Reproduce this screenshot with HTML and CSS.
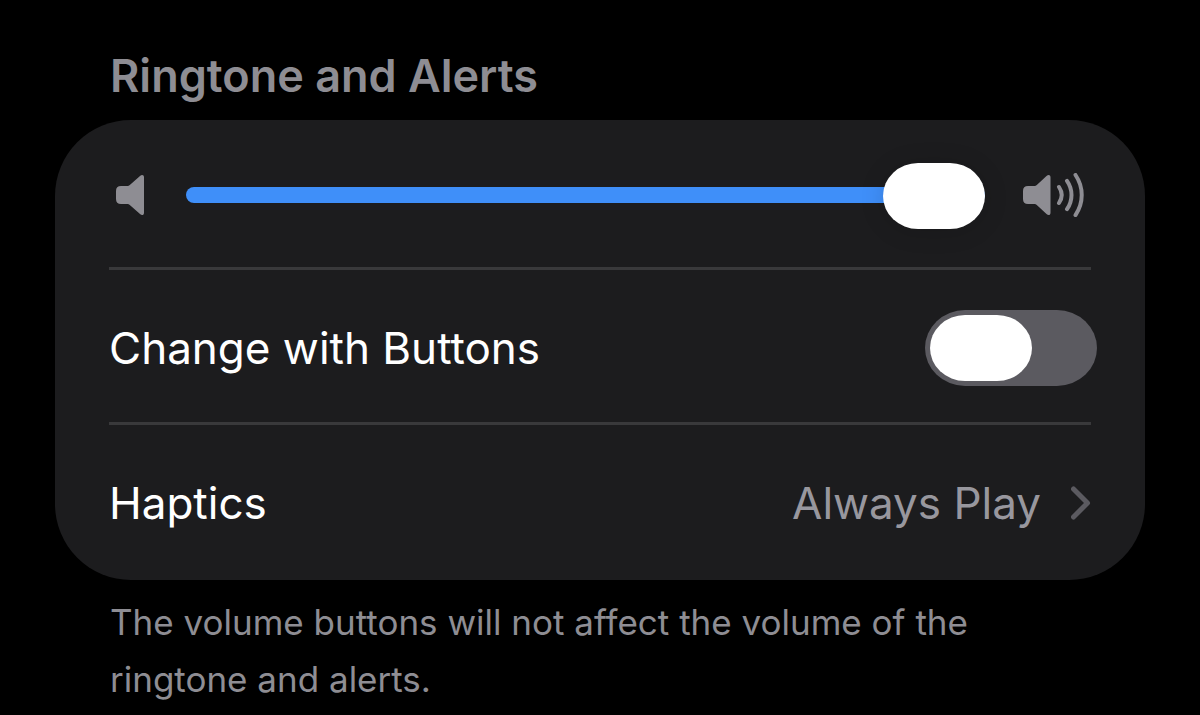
FILE: index.html
```html
<!DOCTYPE html>
<html lang="en">
<head>
    <meta charset="UTF-8">
    <meta name="viewport" content="width=device-width, initial-scale=1.0">
    <title>Sounds &amp; Haptics</title>
    <link rel="stylesheet" href="styles.css">
</head>
<body>
    <main class="settings">
        <h2 class="section-title" id="volumeTitle">Ringtone and Alerts</h2>

        <div class="card">
            <div class="row row-volume">
                <svg class="icon-speaker" viewBox="0 0 28 42" aria-hidden="true">
                    <path d="M5 12h6.500c.9 0 1.600-.3 2.300-.9L24 1.900C26 .2 28 .9 28 3.300v35.400c0 2.400-2 3.100-4 1.400L13.800 30.900c-.7-.6-1.400-.9-2.300-.9H5c-3.300 0-5-1.700-5-5v-8c0-3.300 1.700-5 5-5z"/>
                </svg>
                <input class="slider" type="range" min="0" max="100" value="100" aria-labelledby="volumeTitle">
                <svg class="icon-speaker-waves" viewBox="0 0 62 44" aria-hidden="true">
                    <path d="M5 13h6.500c.9 0 1.600-.3 2.300-.9L23.500 2.900c2-1.700 4-1 4 1.400v35.400c0 2.400-2 3.100-4 1.400L13.800 31.900c-.7-.6-1.400-.9-2.300-.9H5c-3.300 0-5-1.700-5-5v-8c0-3.300 1.700-5 5-5z"/>
                    <path class="wave" d="M36 14c3.400 5 3.400 11 0 16M44 7.800c6 8.600 6 19.800 0 28.400M52.500 2c8.300 12.200 8.300 27.800 0 40"/>
                </svg>
            </div>

            <label class="row row-switch">
                <span>Change with Buttons</span>
                <input class="toggle" type="checkbox" role="switch">
            </label>

            <a class="row row-link" href="#haptics">
                <span>Haptics</span>
                <span class="row-value">
                    Always Play
                    <svg class="icon-chevron" viewBox="0 0 20 34" aria-hidden="true">
                        <path d="M2.500 3l14 14-14 14"/>
                    </svg>
                </span>
            </a>
        </div>

        <p class="section-note">The volume buttons will not affect the volume of the ringtone and alerts.</p>
    </main>
</body>
</html>
```
FILE: styles.css
```css
body {
    margin: 0;
    background: #000000;
    color: #ffffff;
    font-family: Inter, "Liberation Sans", sans-serif;
    font-size: 44px;
    line-height: 56px;
}
.settings {
    padding: 48px 55px 0;
}
.section-title {
    margin: 0 0 16px;
    padding: 0 55px;
    color: #8e8d93;
    font-size: 45px;
    font-weight: 600;
    line-height: 56px;
}
.card {
    padding: 0 54px;
    background: #1c1c1e;
    border-radius: 76px;
}
.row {
    display: flex;
    align-items: center;
    justify-content: space-between;
    box-sizing: border-box;
    color: #ffffff;
    text-decoration: none;
}
.row + .row {
    border-top: 3px solid #39393b;
}
.row-volume {
    gap: 38px;
    min-height: 147px;
    padding: 3px 6px 0 7px;
}
.row-switch {
    min-height: 155px;
    padding-top: 4px;
}
.row-link {
    min-height: 158px;
}
.icon-speaker {
    flex: none;
    width: 28px;
    height: 42px;
    margin-right: 4px;
    fill: #8e8d93;
}
.icon-speaker-waves {
    flex: none;
    width: 62px;
    height: 44px;
    fill: #8e8d93;
}
.wave {
    fill: none;
    stroke: #8e8d93;
    stroke-width: 4;
    stroke-linecap: round;
}
.slider {
    flex: 1;
    min-width: 0;
    height: 66px;
    margin: 0;
    appearance: none;
    background: transparent;
}
.slider::-webkit-slider-runnable-track {
    height: 16px;
    background: #3f8ff9;
    border-radius: 8px;
}
.slider::-webkit-slider-thumb {
    appearance: none;
    width: 102px;
    height: 66px;
    margin-top: -24px;
    background: #ffffff;
    border-radius: 35px / 33px;
    box-shadow: 0 2px 24px rgba(0, 0, 0, 0.15);
}
.toggle {
    flex: none;
    box-sizing: border-box;
    width: 172px;
    height: 76px;
    margin: 0 -6px 0 0;
    padding: 5px;
    appearance: none;
    background: #5b5a60;
    border-radius: 40px / 38px;
}
.toggle::before {
    content: "";
    display: block;
    width: 102px;
    height: 66px;
    background: #ffffff;
    border-radius: 35px / 33px;
}
.toggle:checked {
    background: #30d158;
}
.toggle:checked::before {
    margin-left: auto;
}
.row-value {
    display: flex;
    align-items: center;
    gap: 30px;
    color: #98979e;
}
.icon-chevron {
    width: 20px;
    height: 34px;
    fill: none;
    stroke: #5b5a60;
    stroke-width: 5;
    stroke-linecap: round;
    stroke-linejoin: round;
}
.section-note {
    margin: 0;
    padding: 14px 55px;
    color: #8e8d93;
    font-size: 35px;
    line-height: 57px;
}
```
